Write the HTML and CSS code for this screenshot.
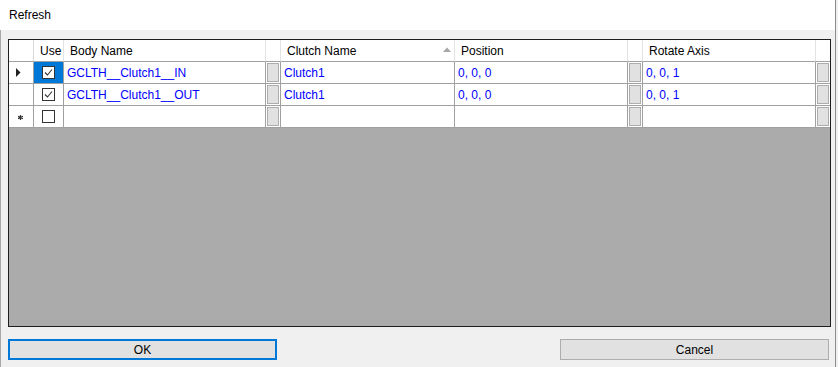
FILE: index.html
```html
<!DOCTYPE html>
<html>
<head>
<meta charset="utf-8">
<title>Refresh</title>
<link rel="stylesheet" href="styles.css">
</head>
<body>
<div class="window">
  <div class="titlebar">Refresh</div>
  <div class="client">
    <div class="grid">
      <div class="hcell corner"></div>
      <div class="hcell">Use</div>
      <div class="hcell">Body Name</div>
      <div class="hcell"></div>
      <div class="hcell sorted"><span>Clutch Name</span><svg class="sort" width="8" height="5" viewBox="0 0 8 5"><polygon points="0,5 8,5 4,0.5" fill="#a6a6a6"/></svg></div>
      <div class="hcell">Position</div>
      <div class="hcell"></div>
      <div class="hcell">Rotate Axis</div>
      <div class="hcell last"></div>

      <div class="rhcell cur"><svg width="5" height="9" viewBox="0 0 5 9"><polygon points="0,0 4.5,4.5 0,9" fill="#222"/></svg></div>
      <div class="cell check selected"><span class="box"><svg width="11" height="11" viewBox="0 0 11 11"><polyline points="2,5.5 4.5,8 9,2.5" fill="none" stroke="#333" stroke-width="1.1"/></svg></span></div>
      <div class="cell">GCLTH__Clutch1__IN</div>
      <div class="cell btncell"><span class="cbtn"></span></div>
      <div class="cell">Clutch1</div>
      <div class="cell">0, 0, 0</div>
      <div class="cell btncell"><span class="cbtn"></span></div>
      <div class="cell">0, 0, 1</div>
      <div class="cell btncell last"><span class="cbtn"></span></div>

      <div class="rhcell"></div>
      <div class="cell check"><span class="box"><svg width="11" height="11" viewBox="0 0 11 11"><polyline points="2,5.5 4.5,8 9,2.5" fill="none" stroke="#333" stroke-width="1.1"/></svg></span></div>
      <div class="cell">GCLTH__Clutch1__OUT</div>
      <div class="cell btncell"><span class="cbtn"></span></div>
      <div class="cell">Clutch1</div>
      <div class="cell">0, 0, 0</div>
      <div class="cell btncell"><span class="cbtn"></span></div>
      <div class="cell">0, 0, 1</div>
      <div class="cell btncell last"><span class="cbtn"></span></div>

      <div class="rhcell newrow"><svg width="5" height="5" viewBox="0 0 5 5"><path d="M2.5 0V5M0 1.2L5 3.8M0 3.8L5 1.2" stroke="#333" stroke-width="1.2"/></svg></div>
      <div class="cell check"><span class="box"></span></div>
      <div class="cell"></div>
      <div class="cell btncell"><span class="cbtn"></span></div>
      <div class="cell"></div>
      <div class="cell"></div>
      <div class="cell btncell"><span class="cbtn"></span></div>
      <div class="cell"></div>
      <div class="cell btncell last"><span class="cbtn"></span></div>

      <div class="empty"></div>
    </div>
    <div class="buttons">
      <button class="btn ok">OK</button>
      <button class="btn cancel">Cancel</button>
    </div>
  </div>
</div>
</body>
</html>
```

FILE: styles.css
```css
* { box-sizing: border-box; }
html, body { margin: 0; padding: 0; }
body {
  background: #f0f0f0;
  font-family: "Liberation Sans", Arial, sans-serif;
  font-size: 12px;
  color: #000;
}
.window {
  width: 836px;
  height: 367px;
  border-right: 1px solid #8c8c8c;
  background: #f0f0f0;
  display: flex;
  flex-direction: column;
  overflow: hidden;
}
.titlebar {
  height: 30px;
  flex: none;
  background: #fff;
  padding-left: 9px;
  display: flex;
  align-items: center;
}
.client {
  flex: 1;
  border-left: 1px solid #a8a8a8;
  padding: 9px 0 0 7px;
}
.grid {
  width: 823px;
  height: 288px;
  border: 1px solid #1e1e1e;
  display: grid;
  grid-template-columns: 25px 30px 202px 15px 174px 173px 15px 173px 14px;
  grid-template-rows: 22px 22px 22px 22px 1fr;
  background: #fff;
}
.hcell {
  border-right: 1px solid #e3e3e3;
  border-bottom: 1px solid #a0a0a0;
  padding-left: 6px;
  display: flex;
  align-items: center;
  white-space: nowrap;
  overflow: hidden;
  background: #fff;
}
.hcell.corner { border-right-color: #d8d8d8; }
.hcell.sorted { justify-content: space-between; padding-right: 3px; }
.sort { display: block; margin-top: -2px; }
.rhcell {
  border-right: 1px solid #a0a0a0;
  border-bottom: 1px solid #a0a0a0;
  display: flex;
  align-items: center;
  background: #fff;
}
.rhcell svg { display: block; }
.rhcell.cur { padding-left: 7px; }
.rhcell.newrow { padding-left: 9px; padding-top: 2px; }
.cell {
  border-right: 1px solid #a0a0a0;
  border-bottom: 1px solid #a0a0a0;
  padding-left: 3px;
  display: flex;
  align-items: center;
  white-space: nowrap;
  overflow: hidden;
  color: #0000ff;
  background: #fff;
}
.last { border-right: none; }
.check { justify-content: center; padding-left: 0; padding-right: 1px; }
.selected { background: #0078d7; }
.box {
  width: 13px;
  height: 13px;
  border: 1px solid #333;
  background: #fff;
  display: flex;
  align-items: center;
  justify-content: center;
}
.box svg { display: block; }
.btncell { padding: 1px; }
.cbtn {
  display: block;
  width: 100%;
  height: 100%;
  border: 1px solid #adadad;
  background: #e1e1e1;
}
.empty {
  grid-column: 1 / -1;
  background: #ababab;
}
.buttons {
  display: flex;
  justify-content: space-between;
  width: 821px;
  margin-top: 12px;
}
.btn {
  height: 21px;
  padding: 0;
  font-family: "Liberation Sans", Arial, sans-serif;
  font-size: 12px;
  color: #000;
  background: #e1e1e1;
}
.ok { width: 269px; border: 2px solid #0078d7; }
.cancel { width: 269px; border: 1px solid #adadad; }
```
